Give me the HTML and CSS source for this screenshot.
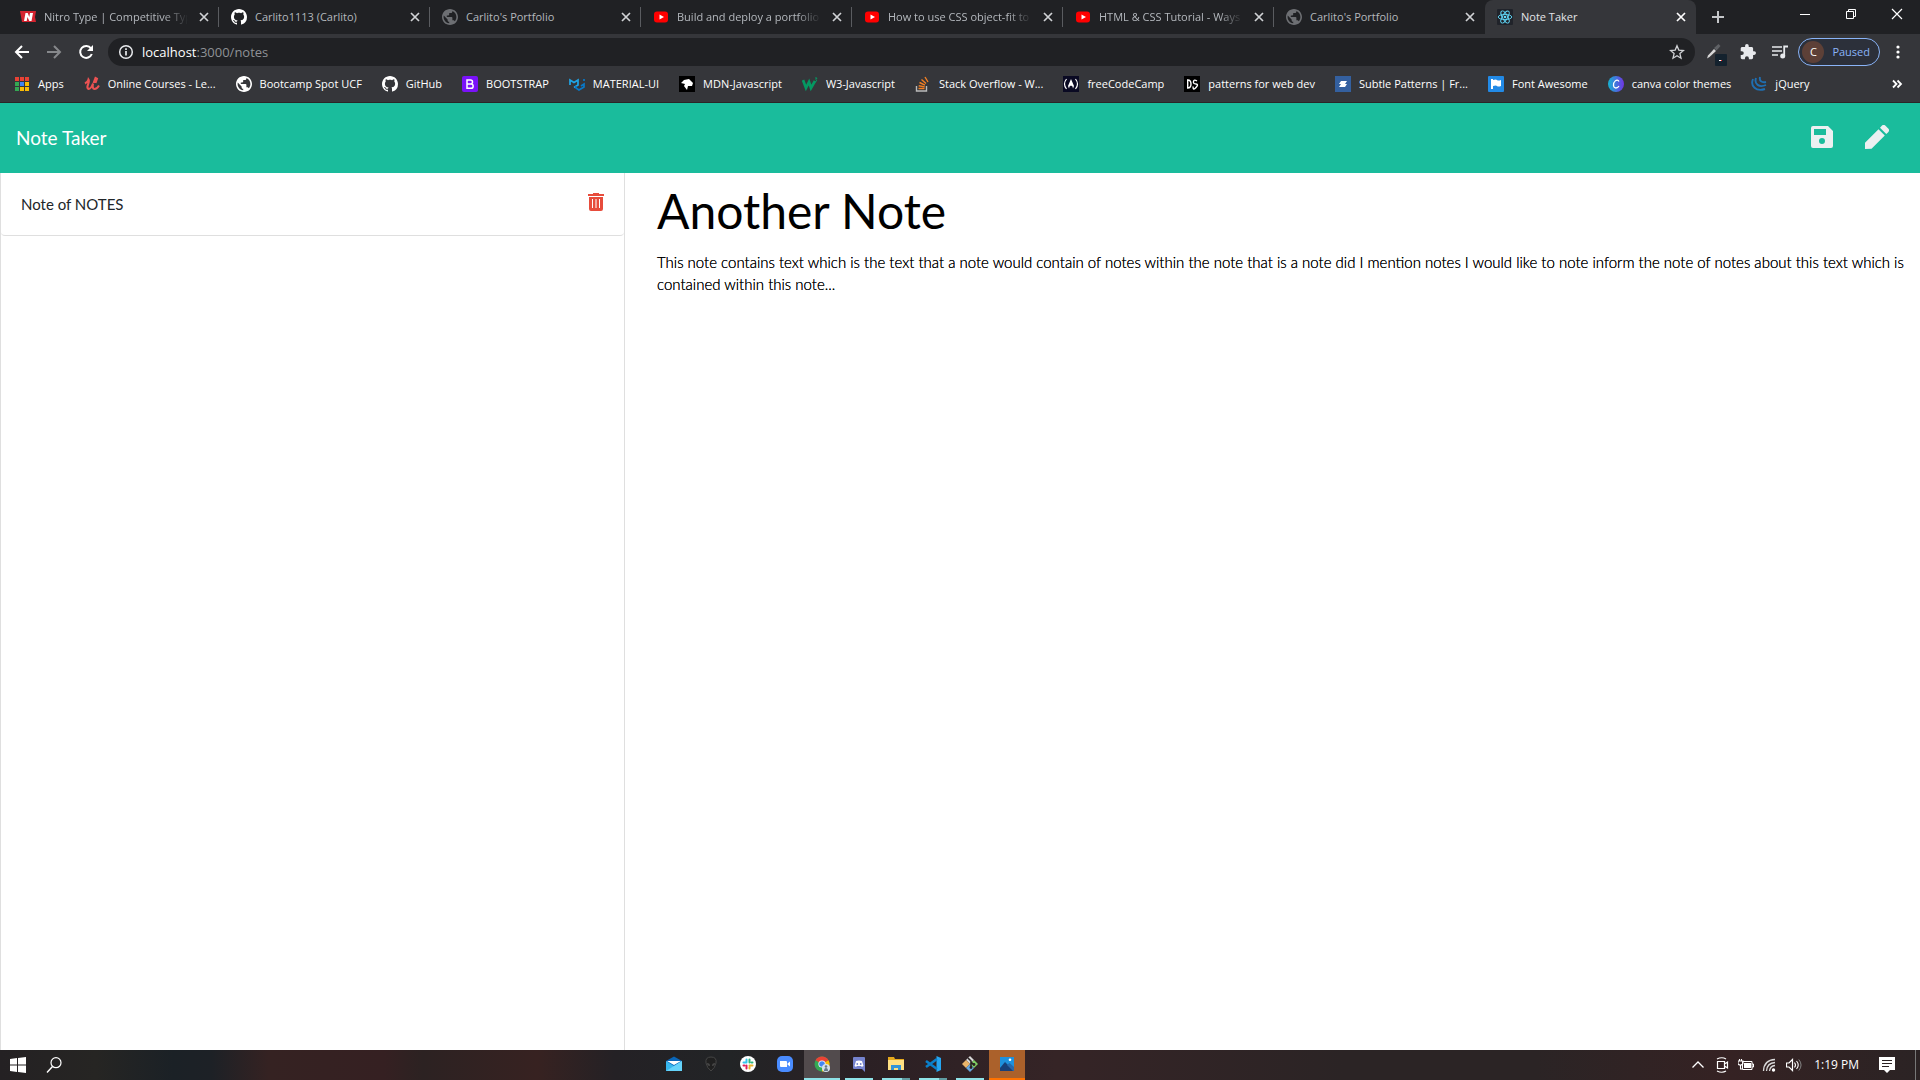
FILE: index.html
```html
<!DOCTYPE html>
<html lang="en">
<head>
<meta charset="utf-8">
<title>Note Taker</title>
<link rel="stylesheet" href="styles.css">
</head>
<body>
<svg class="sprite" aria-hidden="true">
  <symbol id="i-close" viewBox="0 0 16 16"><path d="M4 4l8 8M12 4l-8 8" stroke="currentColor" stroke-width="1.700" fill="none"/></symbol>
  <symbol id="i-globe" viewBox="2 2 20 20"><path fill="currentColor" d="M12 2C6.480 2 2 6.480 2 12s4.480 10 10 10 10-4.480 10-10S17.520 2 12 2zm-1 17.930c-3.950-.49-7-3.850-7-7.930 0-.62.08-1.210.21-1.790L9 15v1c0 1.100.9 2 2 2v1.930zm6.900-2.540c-.26-.81-1-1.390-1.900-1.390h-1v-3c0-.55-.45-1-1-1H8v-2h2c.55 0 1-.45 1-1V7h2c1.100 0 2-.9 2-2v-.41c2.930 1.190 5 4.060 5 7.410 0 2.080-.8 3.970-2.100 5.390z"/></symbol>
  <symbol id="i-github" viewBox="0 0 16 16"><path fill="currentColor" d="M8 0C3.580 0 0 3.580 0 8c0 3.540 2.290 6.530 5.470 7.590.4.070.55-.17.55-.38 0-.19-.01-.82-.01-1.490-2.010.37-2.530-.49-2.690-.94-.09-.23-.48-.94-.82-1.130-.28-.15-.68-.52-.01-.53.63-.01 1.080.58 1.230.82.72 1.210 1.870.87 2.330.66.070-.52.28-.87.51-1.070-1.780-.2-3.640-.89-3.640-3.950 0-.87.31-1.590.82-2.150-.08-.2-.36-1.020.08-2.120 0 0 .67-.21 2.200.82.64-.18 1.320-.27 2-.27s1.360.09 2 .27c1.530-1.040 2.200-.82 2.200-.82.44 1.100.16 1.920.08 2.120.51.56.82 1.270.82 2.150 0 3.070-1.870 3.750-3.650 3.950.29.25.54.73.54 1.480 0 1.070-.01 1.930-.01 2.200 0 .21.15.46.55.38A8.010 8.010 0 0 0 16 8c0-4.420-3.580-8-8-8z"/></symbol>
  <symbol id="i-youtube" viewBox="0 0 16 16"><rect x="1" y="2.500" width="14" height="11" rx="3" fill="#f00"/><path d="M6.500 5.500v5L11 8z" fill="#fff"/></symbol>
</svg>

<header class="browser">
  <nav class="tabs" aria-label="Browser tabs">
    <div class="tab"><svg class="ico" viewBox="0 0 16 16"><path d="M0 2h16l-1 6 1 5H2z" fill="#d4232f"/><path d="M4 12l1.500-8h2.200l1.600 4 .7-4H13l-1.500 8H9.300L7.500 8l-.8 4z" fill="#fff"/></svg><span class="title fade">Nitro Type | Competitive Typ</span><button class="close" aria-label="Close tab"><svg class="ico"><use href="#i-close"/></svg></button></div>
    <div class="tab"><svg class="ico white"><use href="#i-github"/></svg><span class="title">Carlito1113 (Carlito)</span><button class="close" aria-label="Close tab"><svg class="ico"><use href="#i-close"/></svg></button></div>
    <div class="tab"><svg class="ico dim"><use href="#i-globe"/></svg><span class="title">Carlito's Portfolio</span><button class="close" aria-label="Close tab"><svg class="ico"><use href="#i-close"/></svg></button></div>
    <div class="tab"><svg class="ico"><use href="#i-youtube"/></svg><span class="title fade">Build and deploy a portfolio</span><button class="close" aria-label="Close tab"><svg class="ico"><use href="#i-close"/></svg></button></div>
    <div class="tab"><svg class="ico"><use href="#i-youtube"/></svg><span class="title fade">How to use CSS object-fit to</span><button class="close" aria-label="Close tab"><svg class="ico"><use href="#i-close"/></svg></button></div>
    <div class="tab"><svg class="ico"><use href="#i-youtube"/></svg><span class="title fade">HTML &amp; CSS Tutorial - Ways</span><button class="close" aria-label="Close tab"><svg class="ico"><use href="#i-close"/></svg></button></div>
    <div class="tab"><svg class="ico dim"><use href="#i-globe"/></svg><span class="title">Carlito's Portfolio</span><button class="close" aria-label="Close tab"><svg class="ico"><use href="#i-close"/></svg></button></div>
    <div class="tab active"><svg class="ico" viewBox="0 0 16 16"><rect width="16" height="16" rx="1" fill="#20232a"/><g fill="none" stroke="#61dafb" stroke-width=".9"><ellipse cx="8" cy="8" rx="6.800" ry="2.600"/><ellipse cx="8" cy="8" rx="6.800" ry="2.600" transform="rotate(60 8 8)"/><ellipse cx="8" cy="8" rx="6.800" ry="2.600" transform="rotate(120 8 8)"/></g><circle cx="8" cy="8" r="1.300" fill="#61dafb"/></svg><span class="title">Note Taker</span><button class="close" aria-label="Close tab"><svg class="ico"><use href="#i-close"/></svg></button></div>
    <button class="newtab" aria-label="New tab"><svg class="ico" viewBox="0 0 16 16"><path d="M8 2v12M2 8h12" stroke="#c4c6c9" stroke-width="2"/></svg></button>
    <div class="window">
      <button aria-label="Minimize"><svg class="ico" viewBox="0 0 16 16"><path d="M3 8.500h10" stroke="#fff"/></svg></button>
      <button aria-label="Restore"><svg class="ico" viewBox="0 0 16 16"><path d="M3.500 5.500h7v7h-7zM5.500 5.500v-2h7v7h-2" stroke="#fff" fill="none"/></svg></button>
      <button aria-label="Close window"><svg class="ico" viewBox="0 0 16 16"><path d="M3 3l10 10M13 3L3 13" stroke="#fff" stroke-width="1.200"/></svg></button>
    </div>
  </nav>

  <div class="toolbar">
    <div class="nav">
      <button aria-label="Back"><svg class="ico" viewBox="0 0 16 16"><path d="M15 8H2M8 2L2 8l6 6" stroke="#fff" stroke-width="2" fill="none"/></svg></button>
      <button aria-label="Forward"><svg class="ico" viewBox="0 0 16 16"><path d="M1 8h13M8 2l6 6-6 6" stroke="#86888b" stroke-width="2" fill="none"/></svg></button>
      <button aria-label="Reload"><svg class="ico" viewBox="0 0 16 16"><path d="M13 4.300A6 6 0 1 0 13.800 10" stroke="#fff" stroke-width="2" fill="none"/><path d="M15 1v6H9z" fill="#fff"/></svg></button>
    </div>
    <div class="omnibox">
      <svg class="ico" viewBox="0 0 16 16"><circle cx="8" cy="8" r="6.300" fill="none" stroke="#e8eaed" stroke-width="1.500"/><path d="M8 7v4.500M8 4.300V6" stroke="#e8eaed" stroke-width="1.700"/></svg>
      <a class="url" href="#"><b>localhost</b>:3000/notes</a>
      <svg class="ico" viewBox="0 0 16 16"><path d="M8 1.800l1.800 4.300 4.700.4-3.600 3.100 1.100 4.600L8 11.700l-4 2.500 1.100-4.600L1.500 6.500l4.700-.4z" fill="none" stroke="#d0d2d5" stroke-width="1.300"/></svg>
    </div>
    <div class="extensions">
      <button aria-label="Color picker"><svg class="ico ext" viewBox="0 0 18 24"><path d="M1 18.500l1-3 6-6.500 2 2-6.500 6z" fill="#d8d8d8"/><path d="M8 8l4.500-4 2 2L10.500 10.500z" fill="#5f6165"/><rect x="9" y="14" width="12" height="12" rx="1" fill="#14222e"/><path d="M13 20.500h2" stroke="#fff"/><path d="M15 20.500h1" stroke="#f33"/></svg></button>
      <button aria-label="Extensions"><svg class="ico" viewBox="1 1 22 22"><path fill="#e8eaed" d="M20.500 11H19V7c0-1.100-.9-2-2-2h-4V3.500a2.500 2.500 0 0 0-5 0V5H4c-1.100 0-2 .9-2 2v3.800h1.500a2.700 2.700 0 0 1 0 5.400H2V20c0 1.100.9 2 2 2h3.800v-1.500a2.700 2.700 0 0 1 5.400 0V22H17c1.100 0 2-.9 2-2v-4h1.500a2.500 2.500 0 0 0 0-5z"/></svg></button>
      <button aria-label="Media controls"><svg class="ico" viewBox="0 0 16 16"><path d="M0 3h10M0 7h10M0 11h6" stroke="#e8eaed" stroke-width="1.700"/><path d="M12.200 12V2.500H16" stroke="#e8eaed" stroke-width="1.800" fill="none"/><circle cx="10.700" cy="12" r="2.500" fill="#e8eaed"/></svg></button>
      <button class="profile"><span class="avatar">C</span>Paused</button>
      <button aria-label="Menu"><svg class="ico" viewBox="0 0 16 16"><g fill="#fff"><circle cx="8" cy="3" r="1.600"/><circle cx="8" cy="8" r="1.600"/><circle cx="8" cy="13" r="1.600"/></g></svg></button>
    </div>
  </div>

  <nav class="bookmarks" aria-label="Bookmarks">
    <a href="#"><svg class="ico" viewBox="0 0 16 16"><path d="M1 1h4v4H1zM6 1h4v4H6zM11 1h4v4h-4z" fill="#e94235"/><path d="M1 6h4v4H1zM1 11h4v4H1z" fill="#34a853"/><path d="M6 6h4v4H6z" fill="#4285f4"/><path d="M11 6h4v4h-4zM11 11h4v4h-4zM6 11h4v4H6z" fill="#fbbc05"/><path d="M5.500 1v14M10.500 1v14M1 5.500h14M1 10.500h14" stroke="#35363a"/></svg>Apps</a>
    <a href="#"><svg class="ico" viewBox="0 0 16 16"><path d="M1 7.500Q4 6 4.500 3.500 5.500 5 4 8.500T4.500 13Q7 13 9 7.500 8 13 10.500 13T15 9.500M9.500 7l2-5 1.500.8L11.500 7" fill="none" stroke="#ec5252" stroke-width="2"/></svg>Online Courses - Le...</a>
    <a href="#"><svg class="ico white"><use href="#i-globe"/></svg>Bootcamp Spot UCF</a>
    <a href="#"><svg class="ico white"><use href="#i-github"/></svg>GitHub</a>
    <a href="#"><svg class="ico" viewBox="0 0 16 16"><rect width="16" height="16" rx="2" fill="#7a12f8"/><path d="M5 4h3.500a2 2 0 0 1 0 4H5h4a2.100 2.100 0 0 1 0 4.300H5zM5 8h4" fill="none" stroke="#fff" stroke-width="1.500"/></svg>BOOTSTRAP</a>
    <a href="#"><svg class="ico" viewBox="0 0 16 16"><path d="M1 9V4l4 2.500L9 4v5l-4 2.500" fill="none" stroke="#1fa6e8" stroke-width="1.700"/><path d="M7 10v2l3 2 5-3V8l-3 2M15 3v2" fill="none" stroke="#0878c8" stroke-width="1.700"/></svg>MATERIAL-UI</a>
    <a href="#"><svg class="ico" viewBox="0 0 16 16"><path d="M0 0h16v16H0z"/><path d="M2 7l3-3 5-1 4 4-1 3H9l-1 4-3-4 1-2z" fill="#fff"/></svg>MDN-Javascript</a>
    <a href="#"><svg class="ico" viewBox="0 0 16 16"><path d="M1 4l3 8 3-6 2 6 4-7" fill="none" stroke="#059862" stroke-width="2.700"/><path d="M13 2h2l-1 1.500q2 1.500-1 2.500" fill="none" stroke="#059862"/></svg>W3-Javascript</a>
    <a href="#"><svg class="ico" viewBox="0 0 16 16"><path d="M1.500 10v5h10v-5" fill="none" stroke="#bbb" stroke-width="1.400"/><path d="M3.500 12.500h6M3.700 9.700l6 1.200M4.500 6.500l5.500 2.700M6.500 3.500l4.500 4M10 1l3 5" stroke="#f48024" stroke-width="1.400"/></svg>Stack Overflow - W...</a>
    <a href="#"><svg class="ico" viewBox="0 0 16 16"><path d="M0 0h16v16H0z" fill="#0a0a23"/><path d="M3.500 3q-4 5 0 10M12.500 3q4 5 0 10" fill="none" stroke="#fff" stroke-width="1.200"/><path d="M8 3l3 7-1 2.500Q10 10 8 9.500 6 10 6 12.500L5 10z" fill="#fff"/></svg>freeCodeCamp</a>
    <a href="#"><svg class="ico" viewBox="0 0 16 16"><path d="M0 0h16v16H0z"/><path d="M3.700 4v8q3.300 0 3.300-4T3.700 4zM13 5q-3-2-3.500.5T12 8t0 3.500-3-1" fill="none" stroke="#fff" stroke-width="1.400"/></svg>patterns for web dev</a>
    <a href="#"><svg class="ico" viewBox="0 0 16 16"><path d="M0 0h16v16H0z" fill="#34609f"/><path d="M6 5h6l-2 3H4zM6 8h6l-2 3H4z" fill="#fff"/></svg>Subtle Patterns | Fr...</a>
    <a href="#"><svg class="ico" viewBox="0 0 16 16"><rect width="16" height="16" rx="1" fill="#228ae6"/><path d="M3 3h2v1q3-1 4 0t4 0v6q-3 1-4 0t-4 0v3H3z" fill="#fff"/></svg>Font Awesome</a>
    <a href="#"><svg class="ico" viewBox="0 0 16 16"><defs><linearGradient id="canva"><stop stop-color="#15b4d2"/><stop offset="1" stop-color="#7134e5"/></linearGradient></defs><circle cx="8" cy="8" r="8" fill="url(#canva)"/><path d="M11 5.500C9 2 5 6 5.500 9.500s4 3 5.500.5" fill="none" stroke="#fff" stroke-width="1.300"/></svg>canva color themes</a>
    <a href="#"><svg class="ico" viewBox="0 0 16 16"><path d="M2 3c-3 7 3 13 12 10M5 2c-2 6 3 10 10 7M9 1c-1 4 2 6 6 5" fill="none" stroke="#1f6fb2" stroke-width="1.900"/></svg>jQuery</a>
    <button class="more" aria-label="More bookmarks"><svg class="ico" viewBox="0 0 16 16"><path d="M4 4.500L7.500 8 4 11.500M8.500 4.500L12 8l-3.500 3.500" fill="none" stroke="#fff" stroke-width="1.800"/></svg></button>
  </nav>
</header>

<div class="navbar">
  <a class="brand" href="#">Note Taker</a>
  <div class="actions">
    <button aria-label="Save note"><svg viewBox="0 0 24 24"><path fill="#ecf0f1" fill-rule="evenodd" d="M3 1h15l5 5v15a2 2 0 0 1-2 2H3a2 2 0 0 1-2-2V3a2 2 0 0 1 2-2zm1 3v6h12V4zm8 9a3 3 0 1 0 0 6 3 3 0 0 0 0-6z"/></svg></button>
    <button aria-label="New note"><svg viewBox="0 0 24 24"><path fill="#ecf0f1" d="M13.500 4.200l6.300 6.300L6.500 23.800 0 24v-6.300zM15 2.700l1.800-1.900a2.600 2.600 0 0 1 3.700 0l2.700 2.700a2.600 2.600 0 0 1 0 3.700L21.300 9z"/></svg></button>
  </div>
</div>

<main class="notes">
  <aside class="list">
    <ul>
      <li><span>Note of NOTES</span><button aria-label="Delete note"><svg viewBox="0 0 16 18"><path fill="#e74c3c" fill-rule="evenodd" d="M5 0h6v1h5v2H0V1h5zM1 4h14v12a2 2 0 0 1-2 2H3a2 2 0 0 1-2-2zm3 2v9h1V6zm3.500 0v9h1V6zM11 6v9h1V6z"/></svg></button></li>
    </ul>
  </aside>
  <article class="note">
    <h1>Another Note</h1>
    <p>This note contains text which is the text that a note would contain of notes within the note that is a note did I mention notes I would like to note inform the note of notes about this text which is contained within this note...</p>
  </article>
</main>

<footer class="taskbar">
  <div class="left">
    <button aria-label="Start"><svg class="ico" viewBox="0 0 16 16"><path fill="#fff" d="M0 2l7-1v6.500H0zM8 1l8-1v7.500H8zM0 8.500h7V15l-7-1zM8 8.500h8V16l-8-1z"/></svg></button>
    <button aria-label="Search"><svg class="ico" viewBox="0 0 16 16"><circle cx="10" cy="5.700" r="5" fill="none" stroke="#fff" stroke-width="1.200"/><path d="M6.500 9.500L1 15.500" stroke="#fff" stroke-width="1.400"/></svg></button>
  </div>
  <div class="apps">
    <button aria-label="Mail"><svg class="ico" viewBox="0 0 16 16"><path d="M0 5l8-4.500L16 5v10H0z" fill="#0a66b8"/><path d="M1 5h14l-7 4z" fill="#fff"/><path d="M0 5l8 5 8-5v10H0z" fill="#36b6ee"/><path d="M0 15L16 5v10z" fill="#65d3fa"/></svg></button>
    <button aria-label="Alienware"><svg class="ico" viewBox="0 0 16 16"><path d="M8 1q-6 0-5 6 1 5 5 8 4-3 5-8 1-6-5-6z" fill="#202020" stroke="#454545"/><path d="M4 7q3 0 3 3-3 0-3-3zM12 7q-3 0-3 3 3 0 3-3z" fill="#484848"/></svg></button>
    <button aria-label="Slack"><svg class="ico" viewBox="0 0 16 16"><circle cx="8" cy="8" r="8" fill="#fff"/><g stroke-width="2" stroke-linecap="round"><path d="M6.500 3.500v3M3.500 6.500h3" stroke="#36c5f0"/><path d="M9.500 3.500v3M12.500 6.500h-1" stroke="#2eb67d"/><path d="M9.500 9.500h3M9.500 11v1.500" stroke="#ecb22e"/><path d="M3.500 9.500h1M6.500 9.500v3" stroke="#e01e5a"/></g></svg></button>
    <button aria-label="Zoom"><svg class="ico" viewBox="0 0 16 16"><rect width="16" height="16" rx="5" fill="#4a8cff"/><path d="M3 5h6q1 0 1 1v5H4q-1 0-1-1zM10.500 7.500L13 5.500v5l-2.500-2z" fill="#fff"/></svg></button>
    <button class="focus open" aria-label="Chrome"><svg class="ico" viewBox="0 0 16 16"><circle cx="8" cy="8" r="7.500" fill="#34a853"/><path d="M8 8L1.500 4.200A7.500 7.500 0 0 1 14.500 4.200z" fill="#ea4335"/><path d="M8 8l6.500-3.800A7.500 7.500 0 0 1 8 15.500z" fill="#fbbc05"/><circle cx="8" cy="8" r="3.600" fill="#fff"/><circle cx="8" cy="8" r="2.800" fill="#4285f4"/><circle cx="12" cy="12" r="4" fill="#d3e0ec"/><path d="M10 15q0-3 2-3t2 3z" fill="#657888"/><circle cx="12" cy="10.500" r="1.300" fill="#657888"/></svg></button>
    <button class="open" aria-label="Discord"><svg class="ico" viewBox="0 0 16 16"><path d="M2 2q0-1 1-1h10q1 0 1 1v14l-3-3H3q-1 0-1-1z" fill="#7583ce"/><path d="M5 5q3-1 6 0l1.500 5q-2 1.500-2.500 0H6q-1 1.500-2.500 0z" fill="#fff"/><circle cx="6.300" cy="8" r=".9" fill="#7583ce"/><circle cx="9.700" cy="8" r=".9" fill="#7583ce"/></svg></button>
    <button class="open multi" aria-label="File Explorer"><svg class="ico" viewBox="0 0 16 16"><path d="M0 1h6l1 2h9v11H0z" fill="#e6a91d"/><path d="M0 4h16v10H0z" fill="#ffe083"/><path d="M3 14V9h10v5h-3v-2H6v2z" fill="#3294d8"/></svg></button>
    <button class="open multi" aria-label="Visual Studio Code"><svg class="ico" viewBox="0 0 16 16"><path d="M11.500 0L16 2v12l-4.500 2z" fill="#25a5f0"/><path d="M12 3L1 11M1 5l11 8" stroke="#0a80cb" stroke-width="2.600"/></svg></button>
    <button class="open" aria-label="Git Bash"><svg class="ico" viewBox="0 0 16 16"><path d="M8 0l4 4-4 4-4-4z" fill="#d9d9d9"/><path d="M4 4l4 4-4 4-4-4z" fill="#e9b46a"/><path d="M12 4l4 4-4 4-4-4z" fill="#7fcf63"/><path d="M8 8l4 4-4 4-4-4z" fill="#67a8e0"/><path d="M6 2l3 3v7M9 6l3 3" stroke="#292121" stroke-width="1.600" fill="none"/><circle cx="9" cy="11.500" r="1.400" fill="#292121"/><circle cx="12" cy="8.500" r="1.400" fill="#292121"/></svg></button>
    <button class="alert" aria-label="Photos"><svg class="ico" viewBox="0 0 16 16"><path d="M1 1h14v14H1z" fill="#1e91dd"/><path d="M1 12l5-6 9 9H1z" fill="#173f78"/><path d="M8 9l2.500-2L15 11v4h-1z" fill="#2868aa"/><circle cx="11" cy="3.800" r="1.300" fill="#fff"/></svg></button>
  </div>
  <div class="tray">
    <svg class="ico" viewBox="0 0 16 16"><path d="M2.500 10.500L8 5l5.500 5.500" fill="none" stroke="#fff" stroke-width="1.300"/></svg>
    <svg class="ico" viewBox="0 0 16 16"><path d="M3.500 4.500h7v7h-7zM10.500 7l3-2v6l-3-2M3 2q5-2.500 9 0M3 14q5 2.500 9 0" fill="none" stroke="#fff" stroke-width="1.200"/></svg>
    <svg class="ico" viewBox="0 0 16 16"><path d="M4.500 4.500h9.500v8H4.500zM14 7h1.500v3H14" fill="none" stroke="#fff"/><path d="M6 6h7v5H6z" fill="#fff"/><path d="M0 4h5v2q0 2-2.500 2T0 6zM1.500 2v2M3.500 2v2M2.500 8v4H4" fill="none" stroke="#fff" stroke-width="1.100"/></svg>
    <svg class="ico" viewBox="0 0 16 16"><path d="M1.500 14Q2 3 13 2.500M4.500 14Q5 6 13 5.500M7.500 14Q8 9 13 8.500" fill="none" stroke="#d8d8d8" stroke-width="1.300"/><circle cx="11.500" cy="13" r="1.700" fill="#fff"/></svg>
    <svg class="ico" viewBox="0 0 16 16"><path d="M.5 6h2.500l3.500-3.500v11L3 10H.5z" fill="none" stroke="#fff" stroke-width="1.200"/><path d="M8.500 5.500q2 2.500 0 5M10.500 4q3.500 4 0 8" fill="none" stroke="#fff" stroke-width="1.100"/><path d="M12.800 2.500q4.500 5.500 0 11" fill="none" stroke="#888"/></svg>
    <time>1:19 PM</time>
    <svg class="ico notice" viewBox="0 0 16 16"><path d="M0 0h16v13h-5l-3 3-3-3H0z" fill="#fff"/><path d="M3 3.500h10M3 6.500h10M3 9.500h7" stroke="#2b2223" stroke-width="1.200"/></svg>
  </div>
</footer>
</body>
</html>
```

FILE: styles.css
```css
* { box-sizing: border-box; }

body {
  margin: 0;
  min-height: 100vh;
  display: flex;
  flex-direction: column;
  background: #fff;
  color: #000;
  font: 15px/22px Lato, "Open Sans", sans-serif;
}

button {
  display: flex;
  align-items: center;
  justify-content: center;
  padding: 0;
  border: 0;
  background: none;
  color: inherit;
  font: inherit;
}

a { color: inherit; text-decoration: none; }
svg { display: block; flex: none; }

.sprite { position: absolute; width: 0; height: 0; }
.ico { width: 16px; height: 16px; }
.white { color: #fff; }
.dim { color: #6d6f73; }

/* Browser chrome */
.browser {
  background: #35363a;
  border-bottom: 1px solid #2a2526;
  color: #fff;
  font: 11px/16px "Open Sans", "Noto Sans", sans-serif;
}

.tabs {
  display: flex;
  height: 34px;
  padding-left: 8px;
  background: #202124;
}

.tab {
  flex: 0 1 211px;
  min-width: 0;
  display: flex;
  align-items: center;
  gap: 8px;
  padding: 0 7px 0 12px;
  color: #b4b8bd;
  background: linear-gradient(#5a5c60, #5a5c60) no-repeat right center / 1px 20px;
}
.tab:nth-child(7) { background: none; }

.tab.active {
  background: #35363a;
  border-radius: 8px 8px 0 0;
  color: #e3e5e8;
}

.title {
  flex: 1;
  min-width: 0;
  white-space: nowrap;
}
.fade { mask-image: linear-gradient(to left, transparent, #000 24px); }
.close { color: #d0d2d5; }
.active .close { color: #fff; }

.newtab { width: 44px; }

.window { display: flex; margin-left: auto; padding-bottom: 6px; }
.window button { width: 46px; }

.toolbar {
  display: flex;
  align-items: center;
  height: 36px;
}

.nav { display: flex; gap: 16px; padding: 0 14px; }

.omnibox {
  flex: 1;
  display: flex;
  align-items: center;
  gap: 8px;
  height: 28px;
  padding: 0 10px;
  border-radius: 14px;
  background: #202124;
}
.url { flex: 1; color: #8f9296; font-size: 13px; }
.url b { color: #fff; font-weight: 400; }

.extensions {
  display: flex;
  align-items: center;
  gap: 16px;
  padding: 0 14px 0 11px;
}
.ico.ext { width: 18px; height: 24px; overflow: visible; }

.profile {
  gap: 8px;
  height: 28px;
  margin: 0 -6px 0 -6px;
  padding: 0 9px 0 3px;
  border: 1px solid #8ab4f8;
  border-radius: 14px;
  background: #2c303a;
  color: #8ab4f8;
}
.avatar {
  width: 22px;
  border-radius: 50%;
  background: #5d4037;
  color: #fff;
  line-height: 22px;
}

.bookmarks {
  display: flex;
  align-items: center;
  gap: 20px;
  height: 32px;
  padding: 0 15px 4px 14px;
}
.bookmarks a {
  display: flex;
  align-items: center;
  gap: 8px;
  white-space: nowrap;
}
.more { margin-left: auto; }

/* Application */
.navbar {
  display: flex;
  align-items: center;
  justify-content: space-between;
  min-height: 70px;
  padding: 0 31px 0 16px;
  background: #1abc9c;
}
.brand { color: #fff; font-size: 19px; }
.actions { display: flex; gap: 31px; padding-bottom: 2px; }
.actions svg { width: 24px; height: 24px; }

.notes {
  flex: 1;
  display: grid;
  grid-template-columns: 1fr 2fr;
}

.list {
  margin-right: 15px;
  border: solid #dfdfdf;
  border-width: 0 1px;
}
.list ul { margin: 0; padding: 0; list-style: none; }
.list li {
  display: flex;
  justify-content: space-between;
  padding: 20px;
  border-bottom: 1px solid #dfdfdf;
  border-radius: 0 0 4px 4px;
  color: #212529;
}
.list button { align-items: flex-start; }
.list button svg { width: 16px; height: 18px; }

.note { padding: 8px 8px 8px 17px; }
.note h1 {
  margin: 0 0 10px;
  font-size: 48px;
  font-weight: 400;
  line-height: 60px;
}
.note p {
  margin: 0;
  font-weight: 300;
  text-shadow: 0 0 #000;
}

/* Taskbar */
.taskbar {
  display: flex;
  height: 30px;
  background: linear-gradient(to right, #242123, #262523 5%, #1b2126 9%, #1d2126 11%, #352222 14%, #352022 20%, #2c2222 22%, #372221 28%, #242125 32%, #222426 38%, #2b2024 45%, #352426 55%, #2b2425 70%, #2b2425 80%, #352223 90%, #2b2324);
  color: #fff;
}
.left { flex: 0 1 656px; display: flex; gap: 20px; padding-left: 10px; }

.apps { display: flex; gap: 1px; }
.apps button { width: 36px; border-bottom: 2px solid transparent; }
.apps .open { background: linear-gradient(#8fe3e8, #8fe3e8) no-repeat center bottom / 28px 2px border-box; }
.apps .multi { background-image: linear-gradient(to right, #8fe3e8 70%, #609da2 70%); }
.apps .focus { background-color: #524b4d; background-size: 36px 2px; }
.apps .alert { background: #ab612b; border-color: #ff7200; }

.tray {
  display: flex;
  align-items: center;
  gap: 8px;
  margin: 0 4px 0 auto;
  padding-right: 20px;
  border-right: 1px solid #777;
  font: 12px/16px "Open Sans", "Noto Sans", sans-serif;
}
.tray time { padding: 0 12px 0 4px; }
```
